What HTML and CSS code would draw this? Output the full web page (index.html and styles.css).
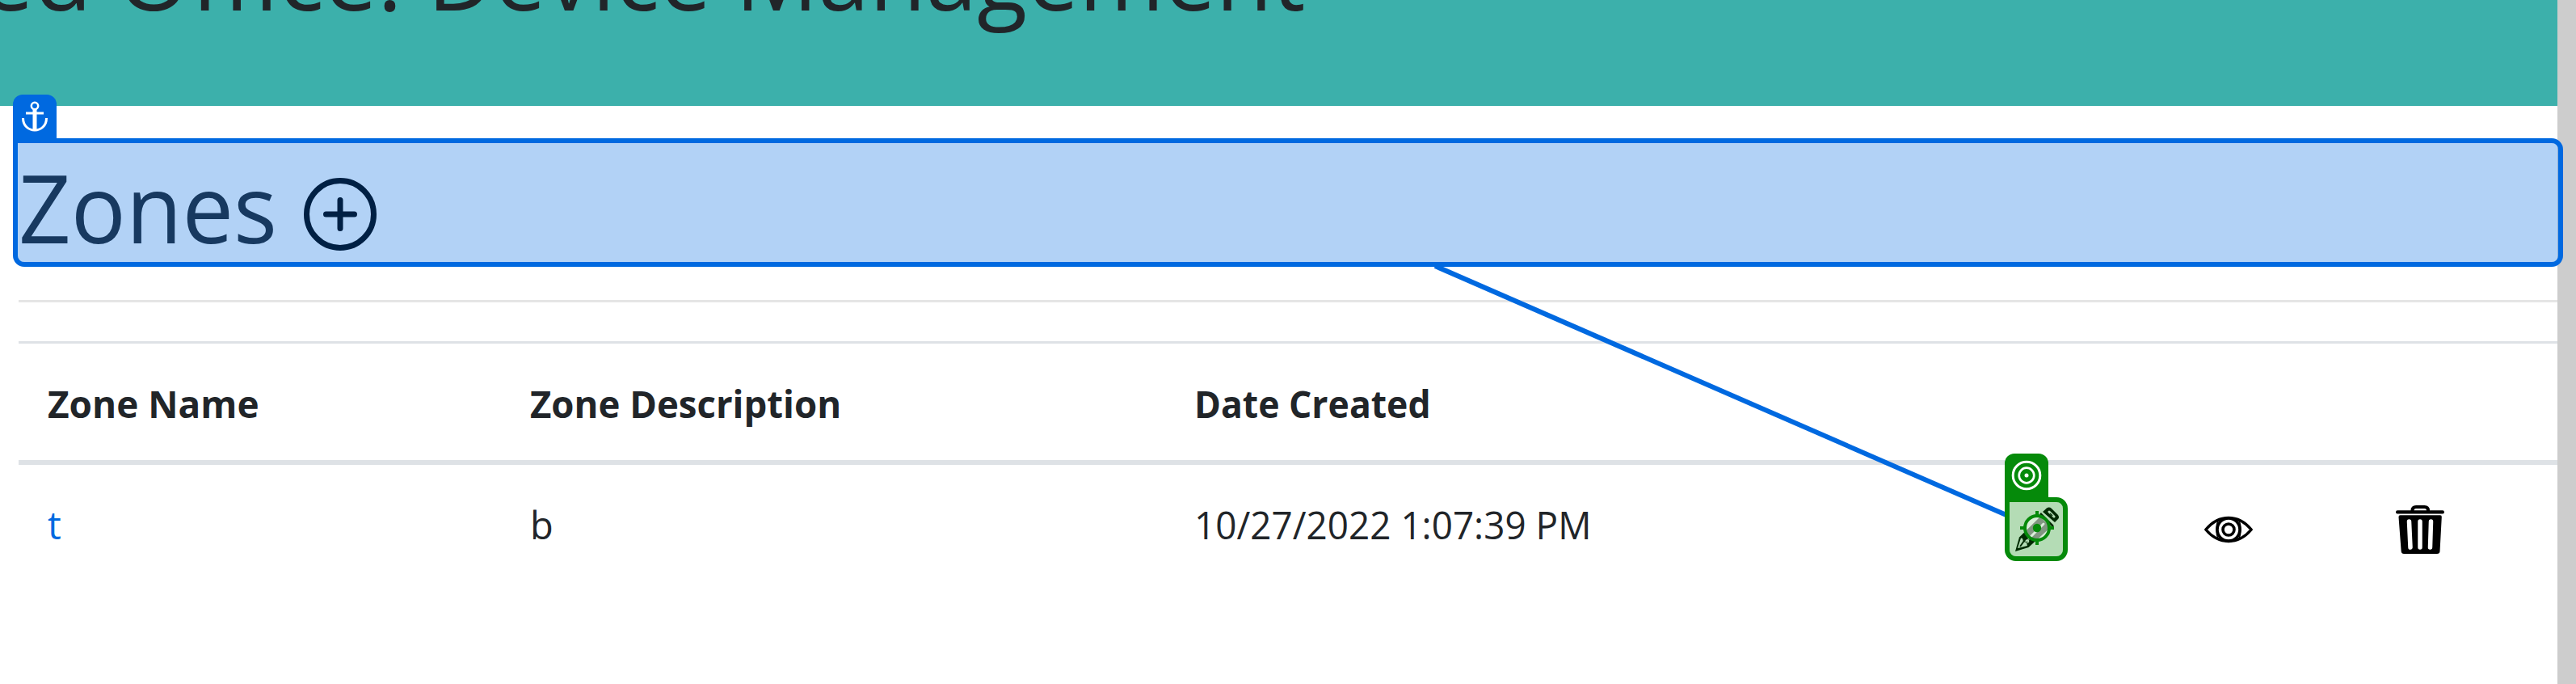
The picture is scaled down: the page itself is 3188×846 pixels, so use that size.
FILE: index.html
```html
<!DOCTYPE html>
<html lang="en">
<head>
<meta charset="utf-8">
<title>Device Management</title>
<link rel="stylesheet" href="styles.css">
</head>
<body>
<div class="page">
  <header class="banner"><h1 class="banner-title">ed Office: <span class="fit banner-name">Device Management</span></h1></header>
  <main class="content">
    <div class="zones-heading">
      <h2 class="zones-title">Zones</h2>
      <svg class="add-icon" viewBox="0 0 90 90"><circle cx="45" cy="45" r="41.500"/><path d="M45 27.500V62.500M27.500 45H62.500"/></svg>
    </div>
    <hr class="rule">
    <div class="table">
      <div class="row head">
        <div class="cell"><span class="fit name-head">Zone Name</span></div>
        <div class="cell"><span class="fit desc-head">Zone Description</span></div>
        <div class="cell"><span class="fit date-head">Date Created</span></div>
      </div>
      <div class="row">
        <div class="cell"><a class="zone-link">t</a></div>
        <div class="cell">b</div>
        <div class="cell"><span class="fit date-value">10/27/2022 1:07:39 PM</span></div>
        <div class="action">
          <svg class="icon" viewBox="0 0 60 60">
            <path fill="#000" d="M3 57 8 39.500 34 14 47 27 19.500 52Z"/>
            <path fill="#fff" d="M6 53 10 40.500 12 41 13 45 17 46 18 50Z"/>
            <path d="M14 44 9 51" stroke="#000" stroke-width="2"/>
            <path d="M16 45c2-4 5-1 2 1" fill="none" stroke="#fff" stroke-width="2"/>
            <path d="M20 41 38 23" stroke="#fff" stroke-width="3" stroke-linecap="round"/>
            <path d="M34 10 50 26" stroke="#000" stroke-width="2.500"/>
            <path fill="#000" d="M37 8 42 3.500Q45 1.500 48 4L56 12Q58 15 56 17L52 21Z"/>
            <path d="M45 8 51 14" stroke="#fff" stroke-width="3" stroke-linecap="round"/>
            <path d="M46 10 49 13" stroke="#000" stroke-width="1.500"/>
          </svg>
        </div>
        <div class="action">
          <svg class="icon" viewBox="0 0 60 60" fill="none" stroke="#000">
            <path d="M1.800 30Q14 15.500 30 15.500T58.200 30Q46 44.500 30 44.500T1.800 30Z" stroke-width="3.400" stroke-linejoin="round"/>
            <circle cx="30" cy="30" r="14" stroke-width="3.600"/>
            <circle cx="30" cy="30" r="7" stroke-width="3.600"/>
            <path d="M17 18Q13 30 17 42M43 18Q47 30 43 42" stroke-width="1.500"/>
          </svg>
        </div>
        <div class="action">
          <svg class="icon" viewBox="0 0 60 60">
            <path d="M20.500 8V6.500Q20.500 2 25 2H35.500Q40 2 40 6.500V8" fill="none" stroke="#000" stroke-width="4"/>
            <rect x="0" y="6.300" width="60" height="4.200" rx="2.100"/>
            <path d="M5.500 12.200H55Q57 12.200 56.800 14.500L54.500 57Q54.300 60 51 60H10Q7 60 6.700 57L3.500 14.500Q3.300 12.200 5.500 12.200Z"/>
            <g stroke="#fff" stroke-width="5.500" stroke-linecap="round"><path d="M16.500 20 18 52M30 20V52M43.500 20 42.500 52"/></g>
          </svg>
        </div>
      </div>
    </div>
  </main>
</div>
<div class="overlay">
  <svg class="connector" viewBox="0 0 3188 846"><path d="M1776 329 2483 637"/></svg>
  <div class="anchor-box"></div>
  <div class="anchor-tag">
    <svg viewBox="0 0 54 60" fill="none" stroke="#fff"><circle cx="27" cy="14" r="4.200" stroke-width="2.500"/><path d="M27 18V44" stroke-width="5"/><path d="M16 23H38" stroke-width="3"/><path d="M12.500 29C12.500 49 41.500 49 41.500 29" stroke-width="3"/></svg>
  </div>
  <div class="target-box">
    <svg viewBox="0 0 78 79"><circle cx="40" cy="38" r="15" fill="#fff" fill-opacity=".5"/><g fill="none" stroke="#058a0a" stroke-width="4"><circle cx="40" cy="38" r="15"/><path d="M40 17V23M40 53V59M19 38H25M55 38H61"/></g><circle cx="40" cy="38" r="5.200" fill="#058a0a"/></svg>
  </div>
  <div class="target-tag">
    <svg viewBox="0 0 54 60" fill="none" stroke="#fff"><circle cx="27" cy="27" r="16.800" stroke-width="3"/><circle cx="27" cy="27" r="9.300" stroke-width="2.700"/><circle cx="27" cy="27" r="2.500" fill="#fff" stroke="none"/></svg>
  </div>
</div>
</body>
</html>
```

FILE: styles.css
```css
* { box-sizing: border-box; }
body {
  margin: 0;
  height: 846px;
  overflow: hidden;
  position: relative;
  background: #cdcdcd;
  color: #212529;
  font: 47px/72px "Open Sans", "Noto Sans", sans-serif;
}
svg { display: block; }
.page { width: 3165px; height: 846px; background: #fff; }
.banner { height: 131px; overflow: hidden; background: #3cb0ab; }
.banner-title {
  margin: -105px 0 0 -24px;
  font-size: 117.600px;
  line-height: 144px;
  font-weight: 400;
  white-space: nowrap;
  width: max-content;
}
.content { padding: 52px 0 0 23px; }
.zones-heading { display: flex; height: 144px; }
.zones-title {
  margin: 0;
  width: 353px;
  flex: none;
  font-size: 117.600px;
  line-height: 144px;
  font-weight: 400;
  transform-origin: 0 0;
  transform: scaleX(.963);
}
.add-icon {
  width: 90px;
  height: 90px;
  margin-top: 37px;
  fill: none;
  stroke: #000;
  stroke-width: 7;
  stroke-linecap: round;
}
.rule { height: 3px; margin: 44px 0 48px; border: 0; background: #e5e5e5; }
.table { border-top: 3px solid #dee2e6; }
.row { display: grid; grid-template-columns: 597px 822px 960px 237px 237px 237px; }
.head { height: 150px; border-bottom: 6px solid #dee2e6; font-weight: 700; }
.cell { padding: 38px 36px 34px; }

.fit { display: inline-block; white-space: nowrap; transform-origin: 0 0; }
.banner-name { transform: scaleX(.97); }
.name-head { transform: scaleX(.977); }
.desc-head { transform: scaleX(.969); }
.date-head { transform: scaleX(.947); }
.date-value { transform: scaleX(.976); }

.zone-link { color: #0069e0; }
.action { display: flex; justify-content: center; padding-top: 50px; }
.icon { width: 60px; height: 60px; }

/* Annotation layer: markers that sit on top of the page */
.overlay { position: absolute; inset: 0; pointer-events: none; }
.connector { position: absolute; inset: 0; width: 3188px; height: 846px; fill: none; stroke: #0069e0; stroke-width: 6; }
.anchor-box {
  position: absolute; left: 16px; top: 171px; width: 3156px; height: 159px;
  border: 6px solid #0069e0; border-radius: 0 14px 14px 14px;
}
.anchor-box::before { content: ""; position: absolute; inset: 0; border-radius: 0 8px 8px 8px; background: rgba(0, 105, 224, .3); }
.anchor-tag { position: absolute; left: 16px; top: 117px; width: 54px; height: 60px; border-radius: 12px 12px 0 0; background: #0069e0; }
.target-box {
  position: absolute; left: 2481px; top: 615px; width: 78px; height: 79px;
  border: 6px solid #058a0a; border-radius: 0 14px 14px 14px;
}
.target-box::before { content: ""; position: absolute; inset: 0; border-radius: 0 8px 8px 8px; background: rgba(5, 138, 10, .3); }
.target-box svg { position: absolute; left: -6px; top: -6px; width: 78px; height: 79px; }
.target-tag { position: absolute; left: 2481px; top: 561px; width: 54px; height: 60px; border-radius: 12px 12px 0 0; background: #058a0a; }
```
